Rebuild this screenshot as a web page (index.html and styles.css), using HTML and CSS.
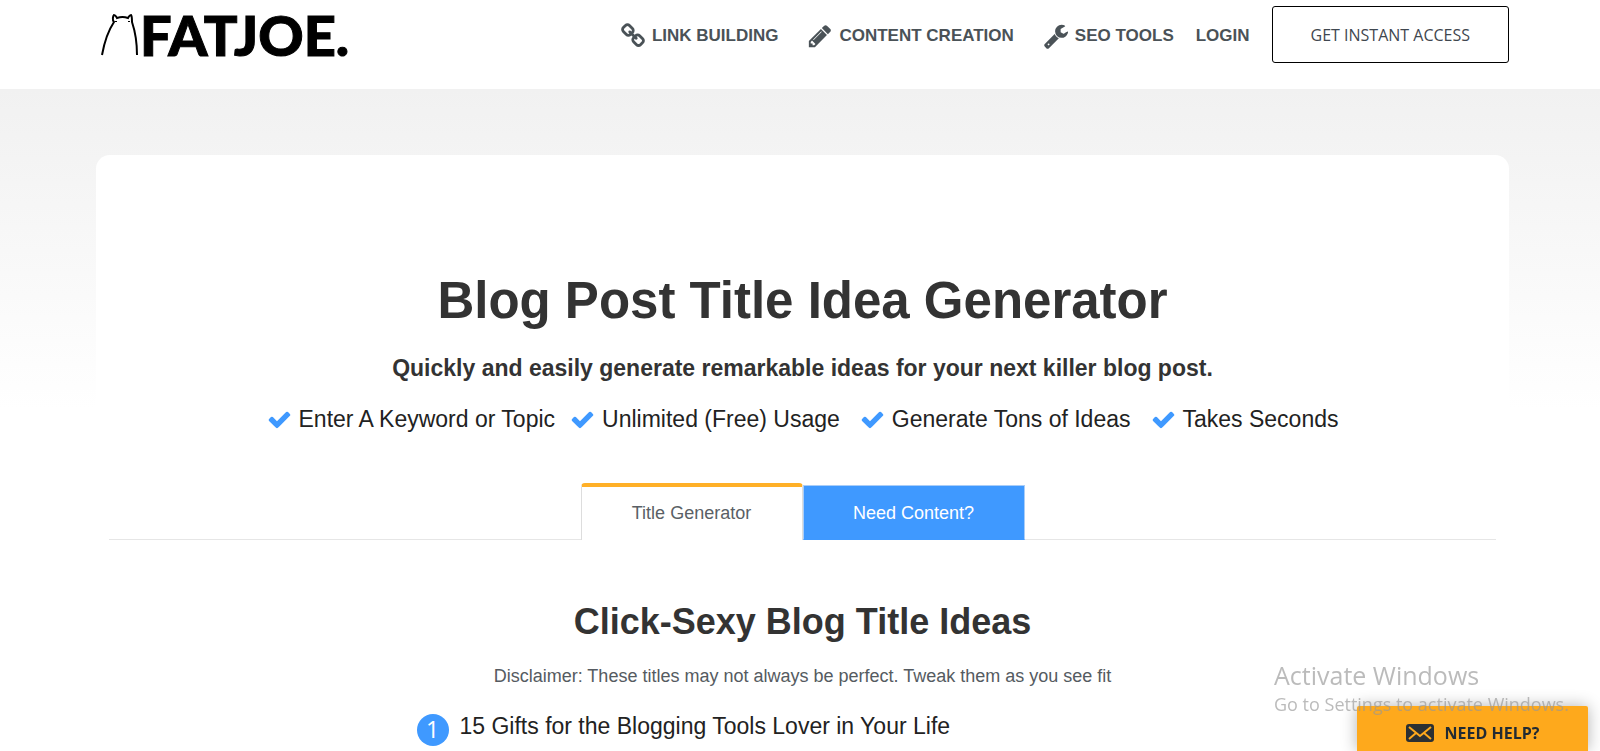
FILE: index.html
```
<!DOCTYPE html>
<html lang="en">
<head>
  <meta charset="UTF-8">
  <meta name="viewport" content="width=device-width, initial-scale=1.0">
  <title>Blog Post Title Idea Generator</title>
  <link rel="stylesheet" href="styles.css">
</head>
<body>
  <svg class="sprite" aria-hidden="true">
    <symbol id="icon-link" viewBox="0 0 1792 1792">
      <path d="M1520 1216q0-40-28-68l-208-208q-28-28-68-28-42 0-72 32 3 3 19 18.5t21.5 21.5 15 19 13 25.5 3.5 27.5q0 40-28 68t-68 28q-15 0-27.5-3.5t-25.5-13-19-15-21.5-21.5-18.5-19q-33 31-33 73 0 40 28 68l206 207q27 27 68 27 40 0 68-26l147-146q28-28 28-67zm-703-705q0-40-28-68l-206-207q-28-28-68-28-39 0-68 27l-147 146q-28 28-28 67 0 40 28 68l208 208q27 27 68 27 42 0 72-31-3-3-19-18.5t-21.5-21.5-15-19-13-25.5-3.5-27.5q0-40 28-68t68-28q15 0 27.5 3.5t25.5 13 19 15 21.5 21.5 18.5 19q33-31 33-73zm895 705q0 120-85 203l-147 146q-83 83-203 83-121 0-204-85l-206-207q-83-83-83-203 0-123 88-209l-88-88q-86 88-208 88-120 0-204-84l-208-208q-84-84-84-204t85-203l147-146q83-83 203-83 121 0 204 85l206 207q83 83 83 203 0 123-88 209l88 88q86-88 208-88 120 0 204 84l208 208q84 84 84 204z"/>
    </symbol>
    <symbol id="icon-pencil" viewBox="0 0 1792 1792">
      <path d="M491 1536l91-91-235-235-91 91v107h128v128h107zm523-928q0-22-22-22-10 0-17 7l-542 542q-7 7-7 17 0 22 22 22 10 0 17-7l542-542q7-7 7-17zm-54-192l416 416-832 832h-416v-416zm683 96q0 53-37 90l-166 166-416-416 166-165q36-38 90-38 53 0 91 38l235 234q37 39 37 91z"/>
    </symbol>
    <symbol id="icon-wrench" viewBox="0 0 1792 1792">
      <path d="M448 1472q0-26-19-45t-45-19-45 19-19 45 19 45 45 19 45-19 19-45zm644-420l-682 682q-37 37-90 37-52 0-91-37l-106-108q-38-36-38-90 0-53 38-91l681-681q39 98 114.5 173.5t173.5 114.5zm634-435q0 39-23 106-47 134-164.5 217.5t-258.5 83.5q-185 0-316.5-131.5t-131.5-316.5 131.5-316.5 316.5-131.5q58 0 121.5 16.5t107.5 46.5q16 11 16 28t-16 28l-293 169v224l193 107q5-3 79-48.5t135.5-81 70.5-35.5q15 0 23.5 10t8.5 25z"/>
    </symbol>
    <symbol id="icon-check" viewBox="0 0 1792 1792">
      <path d="M1671 566q0 40-28 68l-724 724-136 136q-28 28-68 28t-68-28l-136-136-362-362q-28-28-28-68t28-68l136-136q28-28 68-28t68 28l294 295 656-657q28-28 68-28t68 28l136 136q28 28 28 68z"/>
    </symbol>
  </svg>

  <header class="header">
    <a class="logo" href="#">
      <svg class="logo-bear" viewBox="0 0 40 42" aria-hidden="true">
        <path d="M2 41C4 30 8 17 14 8C12 6 13 2 14 1C15 1 16 2 17 4C20 3 25 3 28 4C29 2 30 1 31 1C32 2 32 6 32 8C35 17 37 28 37 41"/>
        <path d="M16 7v1M29 7v1"/>
      </svg>
      <span>FATJOE.</span>
    </a>
    <nav class="nav">
      <a class="nav-link" href="#"><svg class="icon"><use href="#icon-link"/></svg>LINK BUILDING</a>
      <a class="nav-link" href="#"><svg class="icon"><use href="#icon-pencil"/></svg>CONTENT CREATION</a>
      <a class="nav-link" href="#"><svg class="icon"><use href="#icon-wrench"/></svg>SEO TOOLS</a>
      <a class="nav-link" href="#">LOGIN</a>
      <a class="access" href="#">GET INSTANT ACCESS</a>
    </nav>
  </header>

  <main class="page">
    <div class="card">
      <h1>Blog Post Title Idea Generator</h1>
      <p class="subtitle">Quickly and easily generate remarkable ideas for your next killer blog post.</p>
      <ul class="features">
        <li><svg class="check"><use href="#icon-check"/></svg>Enter A Keyword or Topic</li>
        <li><svg class="check"><use href="#icon-check"/></svg>Unlimited (Free) Usage</li>
        <li><svg class="check"><use href="#icon-check"/></svg>Generate Tons of Ideas</li>
        <li><svg class="check"><use href="#icon-check"/></svg>Takes Seconds</li>
      </ul>

      <div class="tabs" role="tablist">
        <button class="tab active" type="button" role="tab" aria-selected="true">Title Generator</button>
        <button class="tab" type="button" role="tab" aria-selected="false">Need Content?</button>
      </div>

      <h2>Click-Sexy Blog Title Ideas</h2>
      <p class="disclaimer">Disclaimer: These titles may not always be perfect. Tweak them as you see fit</p>
      <ol class="ideas">
        <li><span class="number">1</span><span>15 Gifts for the Blogging Tools Lover in Your Life</span></li>
      </ol>
    </div>
  </main>

  <button class="help" type="button">
    <svg class="envelope" viewBox="0 0 28 18" aria-hidden="true">
      <rect width="28" height="18" rx="3"/>
      <path d="M3 3l11 9L25 3M3 15l7-6M25 15l-7-6"/>
    </svg>
    NEED HELP?
  </button>

  <div class="watermark">
    <p class="watermark-title">Activate Windows</p>
    <p class="watermark-text">Go to Settings to activate Windows.</p>
  </div>
</body>
</html>
```
FILE: styles.css
```
* {
  box-sizing: border-box;
}

body {
  margin: 0;
  font-family: "Liberation Sans", Arial, sans-serif;
  color: #333;
  background-color: #fff;
}

h1, h2, p, ul, ol {
  margin: 0;
  padding: 0;
}

ul, ol {
  list-style: none;
}

a {
  text-decoration: none;
}

.sprite {
  display: none;
}

.header {
  display: flex;
  justify-content: space-between;
  align-items: flex-start;
  height: 89px;
  padding: 6px 91px 0 100px;
}

.logo {
  display: flex;
  align-items: center;
  height: 58px;
  color: #000;
  font-family: Lato, sans-serif;
  font-size: 56px;
  font-weight: 900;
  line-height: 58px;
  -webkit-text-stroke: 1px #000;
}

.logo-bear {
  width: 40px;
  height: 42px;
  fill: none;
  stroke: #000;
  stroke-width: 2;
}

.nav {
  display: flex;
  align-items: center;
  gap: 22px;
}

.nav-link {
  display: flex;
  align-items: center;
  gap: 6px;
  padding-top: 3px;
  color: #4a5257;
  font-size: 17px;
  font-weight: bold;
}

.nav-link + .nav-link .icon {
  margin-left: 7px;
}

.icon {
  width: 26px;
  height: 26px;
  fill: #4a5257;
}

.access {
  padding: 1px 38px 0;
  border: 1px solid #000;
  border-radius: 3px;
  color: #3f474f;
  font-family: "Open Sans", sans-serif;
  font-size: 16px;
  line-height: 54px;
}

.page {
  padding: 66px 91px 0 96px;
  background: linear-gradient(#f1f1f1, #f4f4f4 70px, #fff 320px);
}

.card {
  padding: 116px 13px 0;
  border-radius: 14px;
  background-color: #fff;
  text-align: center;
}

h1 {
  font-size: 51px;
  line-height: 60px;
}

.subtitle {
  margin-top: 22px;
  font-size: 23px;
  font-weight: bold;
  line-height: 30px;
}

.features {
  display: flex;
  justify-content: center;
  gap: 15px;
  margin-top: 21px;
  color: #222;
  font-size: 23px;
  line-height: 30px;
}

.features li {
  display: flex;
  align-items: center;
  gap: 7px;
}

.features li + li + li {
  margin-left: 5px;
}

.check {
  width: 25px;
  height: 25px;
  fill: #3f99ff;
}

.tabs {
  display: flex;
  justify-content: center;
  align-items: flex-end;
  margin-top: 49px;
  border-bottom: 1px solid #e6e6e6;
}

.tab {
  width: 222px;
  height: 55px;
  margin-bottom: -1px;
  padding: 2px 0 0;
  border: 1px solid #a9cdf8;
  border-bottom-color: #3f99ff;
  background-color: #3f99ff;
  color: #fff;
  font-family: inherit;
  font-size: 18px;
  cursor: pointer;
}

.tab.active {
  height: 57px;
  padding-top: 0;
  border: 1px solid #ddd;
  border-top: 4px solid #ffb027;
  border-bottom: 0;
  border-radius: 4px 4px 0 0;
  background-color: #fff;
  color: #5a5f66;
}

h2 {
  margin-top: 60px;
  font-size: 36px;
  line-height: 44px;
}

.disclaimer {
  margin-top: 20px;
  color: #555b61;
  font-size: 18px;
  line-height: 24px;
}

.ideas {
  width: 772px;
  max-width: 100%;
  margin: 26px auto 0;
  color: #222;
  font-size: 23px;
  line-height: 24px;
  text-align: left;
}

.ideas li {
  display: flex;
  gap: 11px;
}

.number {
  width: 32px;
  height: 32px;
  border-radius: 50%;
  background-color: #3f99ff;
  color: #fff;
  font-family: "Open Sans", sans-serif;
  line-height: 30px;
  text-align: center;
}

.help {
  position: fixed;
  right: 12px;
  bottom: 0;
  display: flex;
  justify-content: center;
  align-items: center;
  gap: 11px;
  width: 231px;
  height: 45px;
  padding: 8px 0 0;
  border: 0;
  border-radius: 2px 2px 0 0;
  background-color: #fea91c;
  box-shadow: 0 0 16px rgba(0, 0, 0, 0.3);
  color: #222b33;
  font-family: "Open Sans", sans-serif;
  font-size: 16px;
  font-weight: bold;
  cursor: pointer;
}

.envelope {
  width: 28px;
  height: 18px;
  fill: #2b3033;
}

.envelope path {
  fill: none;
  stroke: #fea91c;
  stroke-width: 2;
}

/* system notice drawn over everything else */
.watermark {
  position: fixed;
  right: 33px;
  bottom: 35px;
  width: 293px;
  color: rgba(150, 150, 150, 0.65);
  font-family: "Open Sans", sans-serif;
  white-space: nowrap;
  pointer-events: none;
}

.watermark-title {
  font-size: 25px;
  line-height: 34px;
}

.watermark-text {
  font-size: 18px;
  line-height: 24px;
}
```
